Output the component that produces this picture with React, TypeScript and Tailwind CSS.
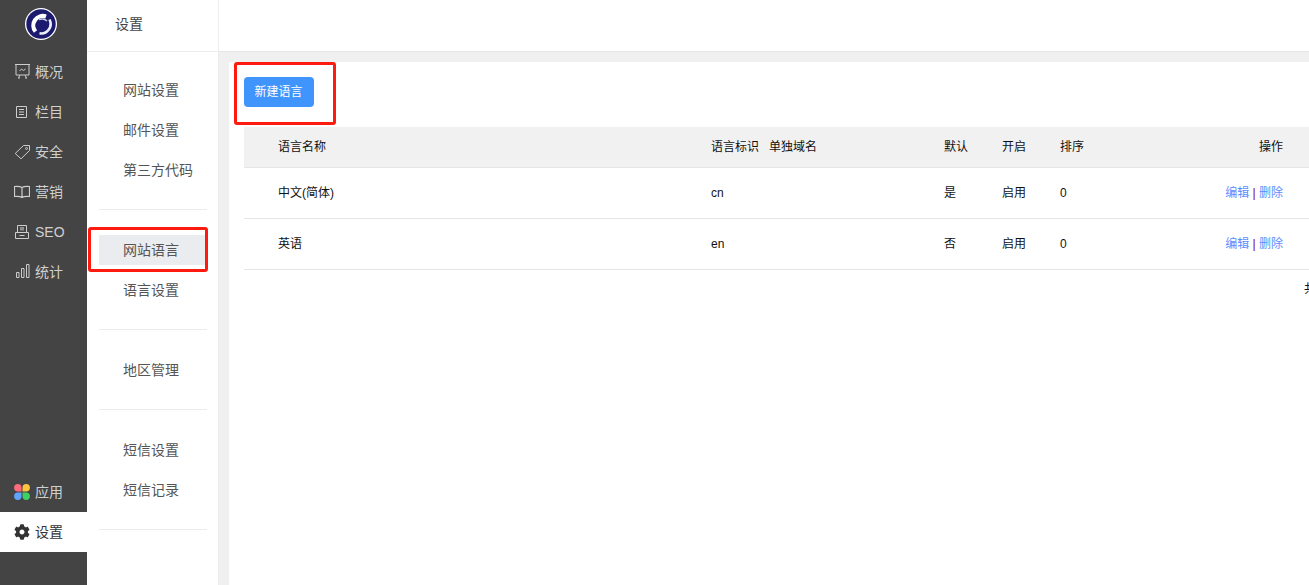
import React from "react";
import { FaCog } from "react-icons/fa";

const stroke = { fill: "none", stroke: "#cdcdcd", strokeWidth: 1 } as const;

const Logo = () => (
  <svg width="32" height="32" viewBox="0 0 32 32">
    <circle cx="16" cy="16" r="16" fill="#fff" />
    <circle cx="16" cy="16" r="14.700" fill="#1b1a6e" />
    <path d="M21 8.500A9.500 9.500 0 0 0 10.500 23.500" fill="none" stroke="#fff" strokeWidth="4.200" />
    <path d="M24.500 11.500A9.500 9.500 0 0 1 14.500 25.300" fill="none" stroke="#eceef8" strokeWidth="2.600" />
    <path d="M14 11.500c3-1 6-.5 8 1.500" fill="none" stroke="#c9cce8" strokeWidth="1.400" />
  </svg>
);

const IconOverview = () => (
  <svg width="16" height="16" viewBox="0 0 16 16" {...stroke}>
    <path d="M1 .500h15M2 .500v10.500h13V.500M6 11l-1.500 3M11 11l1.500 3M4 14h2M11 14h2M5.500 7l2-2 2 1.500 2-1.500" />
  </svg>
);
const IconColumn = () => (
  <svg width="16" height="16" viewBox="0 0 16 16" {...stroke}>
    <path d="M2.500 2.500h10v11h-10zM5 5.500h5M5 8h5M5 10.500h5" />
  </svg>
);
const IconTag = () => (
  <svg width="16" height="16" viewBox="0 0 16 16" {...stroke}>
    <path d="M9.500 1.500h6v5L7 14.800 1.200 9.500z" />
    <circle cx="12.500" cy="4.500" r="1" />
  </svg>
);
const IconBook = () => (
  <svg width="16" height="16" viewBox="0 0 16 16" {...stroke}>
    <path d="M8 3.500C6.500 2.500 3 2.300.5 2.500v10c2.500-.2 6 0 7.500 1 1.500-1 5-1.200 7.500-1v-10C13 2.300 9.500 2.500 8 3.500zM8 3.500v10" strokeWidth="1.200" />
  </svg>
);
const IconSeo = () => (
  <svg width="16" height="16" viewBox="0 0 16 16" {...stroke}>
    <path d="M3.500 8.500v-7h9v7M1.500 8.500h13v6h-13zM5.500 11.500h5" />
    <rect x="6" y="3" width="4" height="3.500" fill="#8f8f8f" stroke="none" />
  </svg>
);
const IconChart = () => (
  <svg width="16" height="16" viewBox="0 0 16 16" {...stroke}>
    <path d="M2.500 8.500h2.500v5H2.500zM7.500 4.500H10v9H7.500zM12.500.500H15v13h-2.500z" />
  </svg>
);
const IconApps = () => (
  <svg width="16" height="16" viewBox="0 0 16 16">
    <path d="M7.500 7.500H3.800A3.700 3.700 0 1 1 7.500 3.800z" fill="#ff6b7c" />
    <path d="M8.500 7.500h3.700A3.700 3.700 0 1 0 8.500 3.800z" fill="#ffc23d" />
    <path d="M7.500 8.500H3.800A3.700 3.700 0 1 0 7.500 12.200z" fill="#5fa5ff" />
    <path d="M8.500 8.500h3.700A3.700 3.700 0 1 1 8.500 12.200z" fill="#3dd065" />
  </svg>
);

const NavItem = ({ icon, label }: { icon: React.ReactNode; label: string }) => (
  <div className="flex h-10 items-center gap-[5px] pl-[14px] text-sm text-[#d0d0d0]">
    <span className="flex h-4 w-4 items-center justify-center">{icon}</span>
    <span>{label}</span>
  </div>
);

function Sub({ items, active }: { items: string[]; active?: string }) {
  return (
    <div className="mb-5 ml-3 mr-[11px] flex flex-col border-b border-[#ebebeb] pb-[19px]">
      {items.map((t) => (
        <div key={t} className="flex h-10 items-center text-sm text-[#555]">
          {t === active ? (
            <div className="flex h-[30px] w-full items-center bg-[#ebecf0] pl-6">{t}</div>
          ) : (
            <span className="pl-6">{t}</span>
          )}
        </div>
      ))}
    </div>
  );
}

const rows = [
  { name: "中文(简体)", code: "cn", def: "是" },
  { name: "英语", code: "en", def: "否" },
];

const Actions = () => (
  <span className="text-[#800080]">
    <a className="text-[#5a8dff]">编辑</a> | <a className="text-[#5a8dff]">删除</a>
  </span>
);

export default function App() {
  return (
    <div
      className="relative flex h-[585px] w-[1309px] overflow-hidden bg-white"
      style={{ fontFamily: '"Liberation Sans","Noto Sans CJK SC",sans-serif' }}
    >
      <aside className="flex w-[87px] shrink-0 flex-col bg-[#444444]">
        <div className="flex h-[52px] items-center justify-center pb-1 pr-[5px]">
          <Logo />
        </div>
        <NavItem icon={<IconOverview />} label="概况" />
        <NavItem icon={<IconColumn />} label="栏目" />
        <NavItem icon={<IconTag />} label="安全" />
        <NavItem icon={<IconBook />} label="营销" />
        <NavItem icon={<IconSeo />} label="SEO" />
        <NavItem icon={<IconChart />} label="统计" />
        <div className="flex-1" />
        <NavItem icon={<IconApps />} label="应用" />
        <div className="flex h-10 items-center gap-[5px] bg-white pl-[14px] text-sm text-[#333]">
          <FaCog className="h-4 w-4 text-[#333]" />
          <span>设置</span>
        </div>
        <div className="h-[33px]" />
      </aside>

      <nav className="w-[132px] shrink-0 border-r border-[#ededed]">
        <div className="flex h-[52px] items-center border-b border-[#ededed] pb-1 pl-7 text-sm text-[#444]">设置</div>
        <div className="flex flex-col pt-[18px]">
          <Sub items={["网站设置", "邮件设置", "第三方代码"]} />
          <Sub items={["网站语言", "语言设置"]} active="网站语言" />
          <Sub items={["地区管理"]} />
          <Sub items={["短信设置", "短信记录"]} />
        </div>
      </nav>

      <main className="flex min-w-0 flex-1 flex-col">
        <div className="h-[52px] border-b border-[#e6e6e6] bg-white" />
        <div className="flex-1 bg-[#f0f0f0] pl-[10px] pt-[10px]">
          <div className="h-full bg-white pl-[15px] pt-[15px]">
            <button className="block h-[30px] w-[70px] rounded-sm bg-[#3f95fb] pr-px text-xs text-white">新建语言</button>
            <table className="mt-5 w-[1065px] table-fixed border-collapse text-xs text-[#111]">
              <colgroup>
                <col className="w-[467px]" />
                <col className="w-[58px]" />
                <col className="w-[175px]" />
                <col className="w-[58px]" />
                <col className="w-[58px]" />
                <col />
              </colgroup>
              <thead>
                <tr className="h-10 border-b border-[#e6e6e6] bg-[#f1f1f1] text-left">
                  <th className="pl-[34px] font-normal">语言名称</th>
                  <th className="font-normal">语言标识</th>
                  <th className="font-normal">单独域名</th>
                  <th className="font-normal">默认</th>
                  <th className="font-normal">开启</th>
                  <th className="font-normal">
                    <div className="flex justify-between pr-[26px]">
                      <span>排序</span>
                      <span>操作</span>
                    </div>
                  </th>
                </tr>
              </thead>
              <tbody>
                {rows.map((r) => (
                  <tr key={r.code} className="h-[51px] border-b border-[#e6e6e6]">
                    <td className="pl-[34px]">{r.name}</td>
                    <td>{r.code}</td>
                    <td />
                    <td>{r.def}</td>
                    <td>启用</td>
                    <td>
                      <div className="flex justify-between pr-[26px]">
                        <span>0</span>
                        <Actions />
                      </div>
                    </td>
                  </tr>
                ))}
              </tbody>
            </table>
            <div className="mt-[11px] w-[1065px] whitespace-nowrap pl-[1060px] text-xs text-[#111]">共</div>
          </div>
        </div>
      </main>

      <div className="pointer-events-none absolute left-[234px] top-[62px] h-[63px] w-[102px] rounded-[3px] border-[3px] border-[#ff1a0f]" />
      <div className="pointer-events-none absolute left-[88px] top-[227px] h-[45px] w-[120px] rounded-[3px] border-[3px] border-[#ff1a0f]" />
    </div>
  );
}
